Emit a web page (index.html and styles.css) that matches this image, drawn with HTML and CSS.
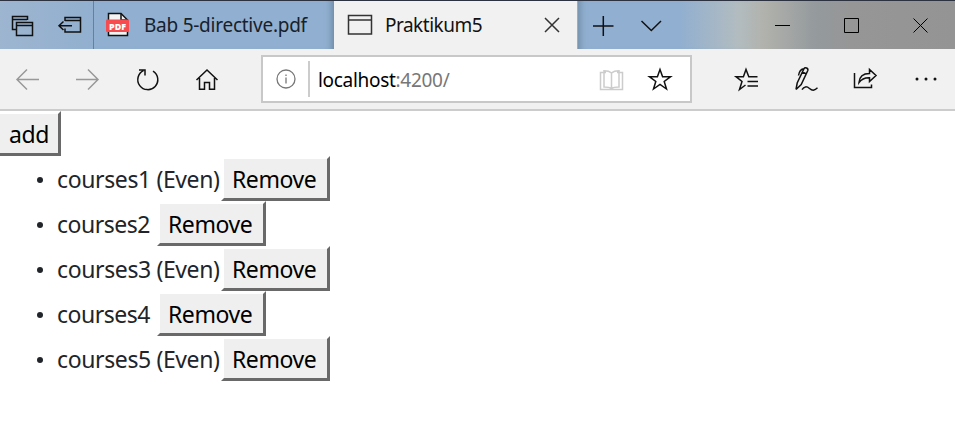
FILE: index.html
```html
<!DOCTYPE html>
<html lang="en">
<head>
<meta charset="utf-8">
<title>Praktikum5</title>
<link rel="stylesheet" href="styles.css">
</head>
<body>
<header class="titlebar">
  <div class="aside">
    <svg width="93" height="48" viewBox="0 1 93 48"><path d="M16 29.500H12.500V16.500H27.500V20M12 19.500H27M16.500 22.500H32.500V35.500H16.500ZM16 25.500H32"/><path d="M65 21V17.500H80.500V32H65V28.500M65 20.500H80M59 25.700H72M63.500 21.500L59 25.700L63.500 30"/></svg>
  </div>
  <div class="tab pdf">
    <svg width="24" height="26" viewBox="0 0 24 26"><path class="page" d="M2.500 1.500H15L21.500 8V23.500H2.500Z"/><path d="M15 1.500V8H21.500"/><rect class="badge" x="0" y="7.500" width="23" height="12.500" rx="1"/><text x="11.500" y="17.500" textLength="17" lengthAdjust="spacingAndGlyphs">PDF</text></svg>
    <span class="tab-title">Bab 5-directive.pdf</span>
  </div>
  <div class="tab active">
    <svg width="26" height="22" viewBox="0 0 26 22"><path d="M1.500 1.500H24.500V20H1.500ZM1 6H24"/></svg>
    <span class="tab-title">Praktikum5</span>
    <svg class="close" width="16" height="16" viewBox="0 0 16 16"><path d="M1 1L15 15M15 1L1 15"/></svg>
  </div>
  <div class="tools">
    <svg width="100" height="48" viewBox="578 1 100 48"><path d="M593 26H613.500M603.300 16V36M641.500 21L651.300 30.500L661 21"/></svg>
  </div>
  <div class="window-buttons">
    <svg width="207" height="48" viewBox="748 1 207 48"><path d="M775 25.500H790M844.500 18.500H858.500V32.500H844.500ZM913.500 18.500L927.500 32.500M927.500 18.500L913.500 32.500"/></svg>
  </div>
</header>
<nav class="toolbar">
  <svg width="261" height="60" viewBox="0 49 261 60"><path class="disabled" d="M39 79.500H17.500M27 69.500L17 79.500L27 89.500M76 79.500H98M88 69.500L98 79.500L88 89.500"/><path d="M153 71.100A10 10 0 1 1 143.500 70.600M139 70H145V75.500M196.500 80L207 70L217.500 80M199.500 78V89.200H204.500V82.500H209.500V89.200H214.500V78"/></svg>
  <div class="address">
    <svg class="info" width="20" height="20" viewBox="0 0 20 20"><circle cx="10" cy="10" r="9"/><path d="M10 8.500V14.500M10 5.500V7"/></svg>
    <span class="url">localhost<span>:4200/</span></span>
    <svg class="address-icons" width="78" height="44" viewBox="598 57 78 44"><path class="reader" d="M606 72.500H600.500V89.500H622.500V72.500H617M611.500 73V88M611.500 73C609 70.700 606.500 70.700 604 70.700V87C607 87 609.500 87 611.500 88.500C613.500 87 616 87 619 87V70.700C616.500 70.700 614 70.700 611.500 73"/><path class="star" d="M660 69.500L662.600 76.700H670.600L664.200 81.500L666.500 89L660 84.500L653.500 89L655.800 81.500L649.400 76.700H657.400Z"/></svg>
  </div>
  <svg class="actions" width="263" height="60" viewBox="692 49 263 60"><path d="M757.500 76.700H748.800L746 69.500L743.400 76.700H736L742 81.500L739.500 89.500L745.500 85M747.500 81.400H758M747.500 85.900H758"/><path d="M796 89.500L797.200 83L804 68.700C805 66.800 808.500 68 807.800 70.500L801.200 84.500L796 89.500M804 68.700C800 69 799 72.500 798.500 75.500M802.300 72L806 73.700M802 89.700C804 86 807 86.300 809.500 88.500C813 91.500 815 90 817.500 87.800"/><path d="M854.500 73V87.500H871.500V84.500M859 82.500C859.500 76 863.500 73.500 869.500 73.500V69.500L876 75.500L869.500 81.500V77.700C864.500 77.500 861.500 79 859 82.500Z"/><g class="dots"><circle cx="917" cy="79" r="1.500"/><circle cx="926" cy="79" r="1.500"/><circle cx="935" cy="79" r="1.500"/></g></svg>
</nav>
<main>
  <button class="add">add</button>
  <ul>
    <li><span class="course">courses1 (Even)</span><button>Remove</button></li>
    <li><span class="course odd">courses2</span><button>Remove</button></li>
    <li><span class="course">courses3 (Even)</span><button>Remove</button></li>
    <li><span class="course odd">courses4</span><button>Remove</button></li>
    <li><span class="course">courses5 (Even)</span><button>Remove</button></li>
  </ul>
</main>
</body>
</html>
```
FILE: styles.css
```css
* { box-sizing: border-box; }
body {
  margin: 0;
  height: 421px;
  overflow: hidden;
  background: #fff;
  color: #212529;
  font-family: "Noto Sans", "Open Sans", sans-serif;
}
svg { display: block; flex: none; fill: none; stroke: #111; stroke-width: 1.5; }
.titlebar {
  display: flex;
  height: 49px;
  border-top: 1px solid #2d3240;
  background: linear-gradient(90deg, #9db5cf 0, #91afd0 100px, #91afd0 680px, #b2bcc0 738px, #b1b2ac 764px, #949a9d 815px, #969696 850px, #949494 955px);
}
.aside { width: 94px; border-right: 1px solid #668197; }
.tab { display: flex; align-items: center; }
.tab-title { font-size: 19px; line-height: 26px; white-space: nowrap; }
.pdf { width: 240px; padding-left: 12px; box-shadow: inset -8px 0 7px -6px #68849f; }
.pdf .tab-title { margin-left: 14px; letter-spacing: -.25px; color: #17212b; }
.pdf .page { fill: #f4f4f4; }
.pdf .badge { fill: #f64c50; stroke: none; }
.pdf text { fill: #fff; stroke: none; font: 800 9px "Open Sans", sans-serif; text-anchor: middle; }
.active { width: 244px; padding: 0 17px 0 13px; background: #f1f1f1; border-right: 1px solid #aaa; color: #111; }
.active svg { stroke: #333; }
.active .tab-title { margin-left: 12px; letter-spacing: -.5px; }
.close { margin-left: auto; }
.tools { flex: 1; box-shadow: inset 8px 0 7px -6px #6f8aa5; }
.window-buttons svg { stroke: #000; stroke-width: 1; }
.toolbar {
  display: flex;
  height: 62px;
  background: #f1f1f1;
  border-bottom: 2px solid #ccc;
}
.toolbar .disabled { stroke: #999; }
.address {
  display: flex;
  align-items: center;
  width: 431px;
  height: 48px;
  margin-top: 6px;
  padding: 0 14px 0 13px;
  border: 2px solid #c8c8c8;
  background: #fff;
}
.info { stroke: #777; stroke-width: 1.3; }
.url {
  display: flex;
  align-items: center;
  height: 36px;
  margin-left: 12px;
  padding: 2px 0 0 8px;
  border-left: 2px solid #ccc;
  color: #000;
  font-size: 19px;
  letter-spacing: -.3px;
}
.url span { color: #777; }
.address-icons { margin-left: auto; }
.address-icons .reader { stroke: #ccc; }
.dots circle { fill: #111; stroke: none; }
button {
  height: 45px;
  padding: 0 8px;
  border: 3px solid;
  border-color: #fff #696969 #696969 #fff;
  background: #efefef;
  color: #000;
  font: 23px/36px "Noto Sans", "Open Sans", sans-serif;
  letter-spacing: -.45px;
  text-align: left;
  white-space: nowrap;
}
main button { width: 109px; }
main .add { display: block; width: 64px; margin-left: -3px; padding-left: 9px; }
ul { margin: 0; padding: 0 0 0 37px; list-style: none; }
li { display: flex; align-items: center; height: 45px; font-size: 23px; letter-spacing: -.38px; }
li::before { content: ""; width: 6px; height: 6px; margin: 2px 14px 0 0; border-radius: 50%; background: #212529; }
.course { width: 164px; line-height: 36px; white-space: nowrap; }
.course.odd { width: 100px; letter-spacing: -.5px; }
```
